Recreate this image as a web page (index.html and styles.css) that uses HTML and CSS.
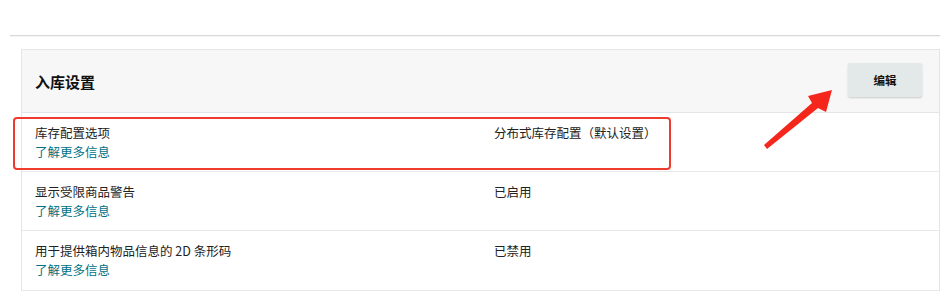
FILE: index.html
```html
<!DOCTYPE html>
<html lang="zh-CN">
<head>
    <meta charset="UTF-8">
    <meta name="viewport" content="width=device-width, initial-scale=1.0">
    <title>入库设置</title>
    <link rel="stylesheet" href="styles.css">
</head>
<body>
    <div class="page">
        <div class="top-rule"></div>

        <div class="card">
            <div class="card-header">
                <h2>入库设置</h2>
                <button class="edit-btn">编辑</button>
            </div>

            <div class="row">
                <div class="label">
                    <div>库存配置选项</div>
                    <a href="#">了解更多信息</a>
                </div>
                <div class="value">分布式库存配置（默认设置）</div>
            </div>
            <div class="row">
                <div class="label">
                    <div>显示受限商品警告</div>
                    <a href="#">了解更多信息</a>
                </div>
                <div class="value">已启用</div>
            </div>
            <div class="row last">
                <div class="label">
                    <div>用于提供箱内物品信息的 2D 条形码</div>
                    <a href="#">了解更多信息</a>
                </div>
                <div class="value">已禁用</div>
            </div>
        </div>

        <!-- annotations -->
        <div class="highlight"></div>
        <svg class="arrow" width="946" height="291" viewBox="0 0 946 291">
            <polygon points="764,145 812,103 808,96 832,90 826,112 818,108 767,149" fill="#f5271c"/>
        </svg>
    </div>
</body>
</html>
```

FILE: styles.css
```css
body {
    margin: 0;
    font-family: "Noto Sans CJK SC", "Noto Sans", Arial, sans-serif;
    color: #222;
    background: #fff;
}
.page {
    position: relative;
    padding: 35px 6px 0 10px;
    height: 256px;
    overflow: hidden;
}
.top-rule {
    height: 1px;
    background: #d5d9d9;
    box-shadow: 0 1px 1px rgba(0, 0, 0, 0.06);
}
.card {
    margin: 13px 0 0 11px;
    border: 1px solid #e3e6e6;
    border-bottom: none;
}
.card-header {
    display: flex;
    align-items: center;
    justify-content: space-between;
    height: 62px;
    padding: 0 17px 0 13px;
    background: #f7f7f7;
    border-bottom: 1px solid #e3e6e6;
}
.card-header h2 {
    margin: 0;
    font-size: 15px;
    font-weight: bold;
    color: #0f1111;
}
.edit-btn {
    width: 74px;
    height: 34px;
    margin-top: -2px;
    border: none;
    border-radius: 2px;
    background: #e3e8e8;
    box-shadow: 0 1px 2px rgba(0, 0, 0, 0.18);
    font-family: inherit;
    font-size: 11.5px;
    font-weight: bold;
    color: #0f1111;
}
.row {
    display: grid;
    grid-template-columns: 459px 1fr;
    height: 59px;
    box-sizing: border-box;
    padding: 10px 13px 0;
    border-bottom: 1px solid #e7e9e9;
    font-size: 12.5px;
    line-height: 19px;
}
.row.last {
    height: 60px;
}
.row a {
    color: #007185;
    text-decoration: none;
}
.highlight {
    position: absolute;
    left: 13px;
    top: 117px;
    width: 654px;
    height: 49px;
    border: 2px solid #ee3b2e;
    border-radius: 4px;
}
.arrow {
    position: absolute;
    left: 0;
    top: 0;
}
```
